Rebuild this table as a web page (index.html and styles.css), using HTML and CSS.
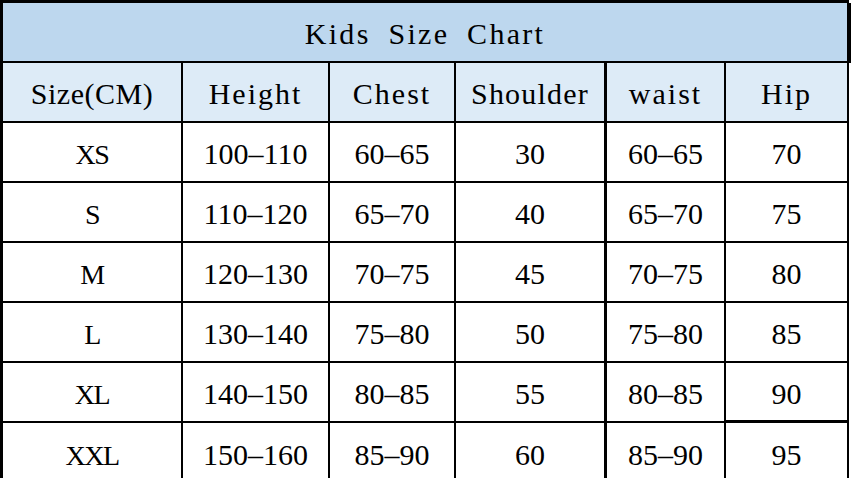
FILE: index.html
```html
<!DOCTYPE html>
<html lang="en">
<head>
<meta charset="utf-8">
<title>Kids Size Chart</title>
<link rel="stylesheet" href="styles.css">
</head>
<body>
<div class="chart">
  <div class="title">Kids Size Chart</div>
  <div class="hd tight">Size(CM)</div>
  <div class="hd">Height</div>
  <div class="hd">Chest</div>
  <div class="hd c4 mid">Shoulder</div>
  <div class="hd">waist</div>
  <div class="hd last">Hip</div>

  <div class="sz">XS</div><div class="num">100–110</div><div class="num">60–65</div><div class="num c4">30</div><div class="num">60–65</div><div class="num last">70</div>
  <div class="sz">S</div><div class="num">110–120</div><div class="num">65–70</div><div class="num c4">40</div><div class="num">65–70</div><div class="num last">75</div>
  <div class="sz">M</div><div class="num">120–130</div><div class="num">70–75</div><div class="num c4">45</div><div class="num">70–75</div><div class="num last">80</div>
  <div class="sz">L</div><div class="num">130–140</div><div class="num">75–80</div><div class="num c4">50</div><div class="num">75–80</div><div class="num last">85</div>
  <div class="sz">XL</div><div class="num">140–150</div><div class="num">80–85</div><div class="num c4">55</div><div class="num">80–85</div><div class="num last thick">90</div>
  <div class="sz end">XXL</div><div class="num end">150–160</div><div class="num end">85–90</div><div class="num c4 end">60</div><div class="num end">85–90</div><div class="num last end">95</div>
</div>
</body>
</html>
```
FILE: styles.css
```css
html, body {
  margin: 0;
  padding: 0;
  background: #fff;
  overflow: hidden;
  height: 478px;
}
.chart {
  width: 849px;
  box-sizing: border-box;
  border-top: 3px solid #000;
  border-left: 3px solid #000;
  border-right: 2px solid #000;
  display: grid;
  grid-template-columns: 180px 147px 126px 151px 119px 121px;
  grid-auto-rows: 60px;
  color: #000;
  font-family: "Liberation Serif", serif;
}
.chart > div {
  box-sizing: border-box;
  border-right: 2px solid #000;
  border-bottom: 2px solid #000;
  display: flex;
  align-items: center;
  justify-content: center;
  white-space: nowrap;
}
.chart > div.c4 { border-right-width: 3px; }
.chart > div.last { border-right: none; }
.chart > div.end { border-bottom: none; }
.chart > div.thick { border-bottom-width: 3px; }
.chart > .title {
  grid-column: 1 / -1;
  border-right: none;
  background: #bdd7ee;
  font-size: 30px;
  letter-spacing: 2.3px;
  word-spacing: 8px;
  padding-top: 3px;
  box-shadow: 4px 0 0 #000;
}
.hd {
  background: #ddebf7;
  font-size: 30px;
  letter-spacing: 2px;
  padding-top: 3px;
}
.hd.tight { letter-spacing: 0.5px; }
.hd.mid { letter-spacing: 1.2px; }
.sz {
  font-size: 28px;
  letter-spacing: -1.5px;
  padding-top: 5px;
}
.num {
  font-size: 30px;
  padding-top: 4px;
}
```
